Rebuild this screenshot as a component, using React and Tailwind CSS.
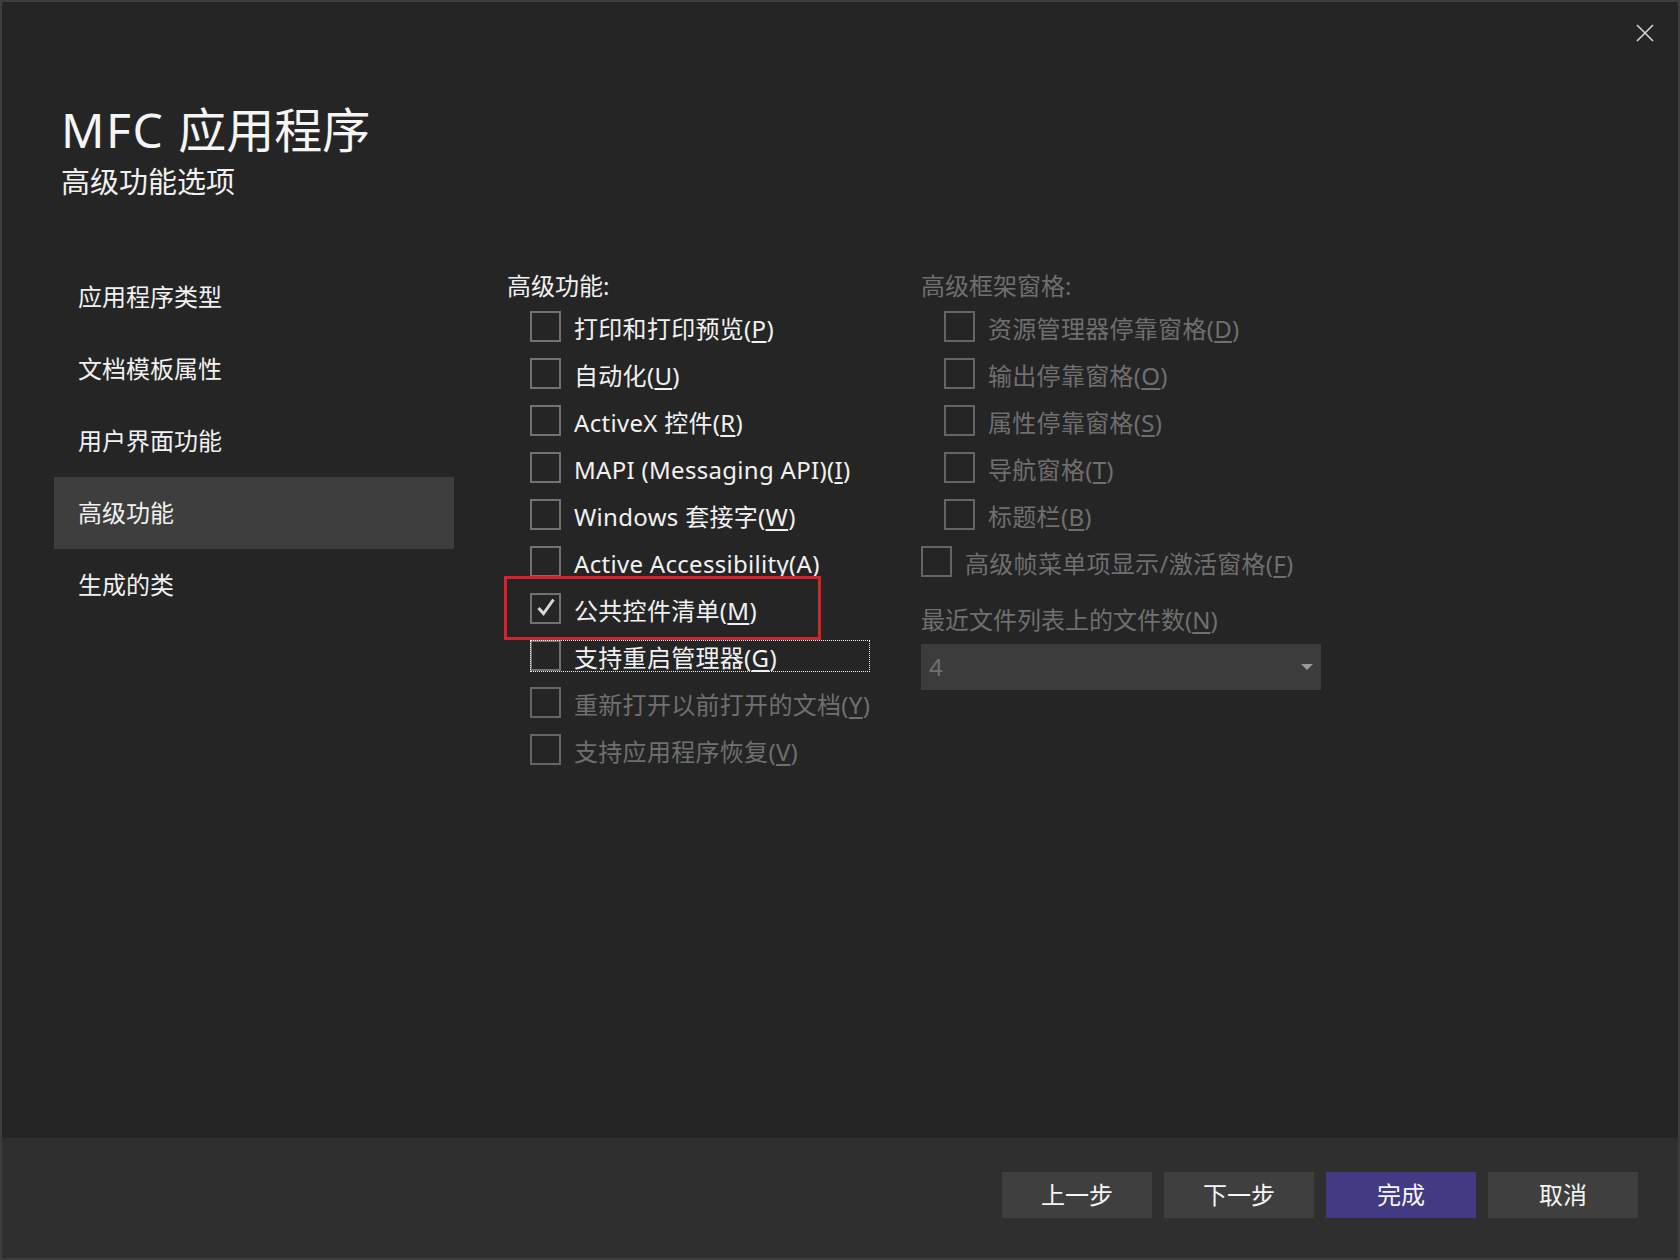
import React from "react";

const NAV = ["应用程序类型", "文档模板属性", "用户界面功能", "高级功能", "生成的类"];

const FEATURES = [
  { pre: "打印和打印预览(", key: "P" },
  { pre: "自动化(", key: "U" },
  { pre: "ActiveX 控件(", key: "R" },
  { pre: "MAPI (Messaging API)(", key: "I" },
  { pre: "Windows 套接字(", key: "W" },
  { pre: "Active Accessibility(", key: "A" },
  { pre: "公共控件清单(", key: "M", checked: true, marked: true },
  { pre: "支持重启管理器(", key: "G", focused: true },
  { pre: "重新打开以前打开的文档(", key: "Y", disabled: true },
  { pre: "支持应用程序恢复(", key: "V", disabled: true },
];

const PANES = [
  { pre: "资源管理器停靠窗格(", key: "D" },
  { pre: "输出停靠窗格(", key: "O" },
  { pre: "属性停靠窗格(", key: "S" },
  { pre: "导航窗格(", key: "T" },
  { pre: "标题栏(", key: "B" },
];

function Box({ checked, disabled }) {
  return (
    <span
      className={
        "flex h-[31px] w-[31px] shrink-0 items-center justify-center border-2 " +
        (disabled ? "border-[#656565]" : "border-[#727272]")
      }
    >
      {checked && (
        <svg width="31" height="31" viewBox="0 0 31 31" className="-m-[2px]">
          <polyline
            points="8.5,15 13.5,20.5 23.5,6.5"
            fill="none"
            stroke="#d8d8d8"
            strokeWidth="3"
          />
        </svg>
      )}
    </span>
  );
}

function Check({ item, disabled }) {
  const off = disabled || item.disabled;
  return (
    <div className="relative flex h-[47px] items-center gap-[13px]">
      <Box checked={item.checked} disabled={off} />
      <span
        className={
          "relative top-[2px] tracking-[0.3px] " +
          (off ? "text-[#6f6f6f]" : "text-[#f1f1f1]")
        }
      >
        {item.pre}
        <span className="underline underline-offset-[3px]">{item.key}</span>)
      </span>
      {item.marked && (
        <div className="pointer-events-none absolute -left-[26px] -top-[9px] h-[64px] w-[317px] border-[3px] border-[#d3232c]" />
      )}
      {item.focused && (
        <div className="pointer-events-none absolute left-0 top-[8px] h-[32px] w-[340px] border border-dotted border-[#f0f0f0]" />
      )}
    </div>
  );
}

export default function App() {
  return (
    <div className="flex h-[1260px] w-[1680px] flex-col border-2 border-[#3d3d3f] bg-[#252526] font-['Noto_Sans','Noto_Sans_CJK_SC',sans-serif] text-[#f1f1f1]">
      <div className="flex flex-1 flex-col">
        <div className="flex justify-end pr-[24px] pt-[22px]">
          <svg width="18" height="18" viewBox="0 0 18 18">
            <path d="M1 1 L17 17 M17 1 L1 17" stroke="#d4d4d4" strokeWidth="1.6" fill="none" />
          </svg>
        </div>

        <div className="mt-[60px] pl-[59px]">
          <h1 className="text-[48px] font-normal leading-[56px] text-[#f5f5f5]">
            <span className="tracking-[1.5px]">MFC </span>应用程序
          </h1>
          <p className="mt-[6px] text-[29px] leading-[36px] text-[#f1f1f1]">高级功能选项</p>
        </div>

        <div className="mt-[61px] flex pl-[52px] text-[24px]">
          <nav className="w-[400px]">
            {NAV.map((n, i) => (
              <div
                key={n}
                className={
                  "flex h-[72px] items-center pl-[24px] leading-[34px] " +
                  (i === 3 ? "bg-[#3e3e3e]" : "")
                }
              >
                {n}
              </div>
            ))}
          </nav>

          <div className="ml-[53px] w-[414px] pt-[8px]">
            <div className="h-[34px] leading-[34px]">高级功能:</div>
            <div className="pl-[23px]">
              {FEATURES.map((f) => (
                <Check key={f.key} item={f} />
              ))}
            </div>
          </div>

          <div className="w-[400px] pt-[8px]">
            <div className="h-[34px] leading-[34px] text-[#6f6f6f]">高级框架窗格:</div>
            <div className="pl-[23px]">
              {PANES.map((p) => (
                <Check key={p.key} item={p} disabled />
              ))}
            </div>
            <Check item={{ pre: "高级帧菜单项显示/激活窗格(", key: "F" }} disabled />

            <div className="mt-[18px] h-[34px] leading-[34px] text-[#6f6f6f]">
              最近文件列表上的文件数(<span className="underline underline-offset-[3px]">N</span>)
            </div>
            <div className="mt-[7px] flex h-[46px] items-center justify-between bg-[#3c3c3c] pl-[8px] pr-[8px]">
              <span className="text-[#6f6f6f]">4</span>
              <svg width="12" height="6" viewBox="0 0 12 6">
                <path d="M0 0 H12 L6 6 Z" fill="#9a9a9a" />
              </svg>
            </div>
          </div>
        </div>
      </div>

      <div className="flex h-[120px] items-start justify-end gap-[12px] bg-[#2f2f2f] pr-[40px] pt-[34px] text-[24px]">
        {["上一步", "下一步", "完成", "取消"].map((b) => (
          <button
            key={b}
            className={
              "flex h-[46px] w-[150px] items-center justify-center leading-none text-[#f5f5f5] " +
              (b === "完成" ? "bg-[#433a84]" : "bg-[#3f3f3f]")
            }
          >
            {b}
          </button>
        ))}
      </div>
    </div>
  );
}
